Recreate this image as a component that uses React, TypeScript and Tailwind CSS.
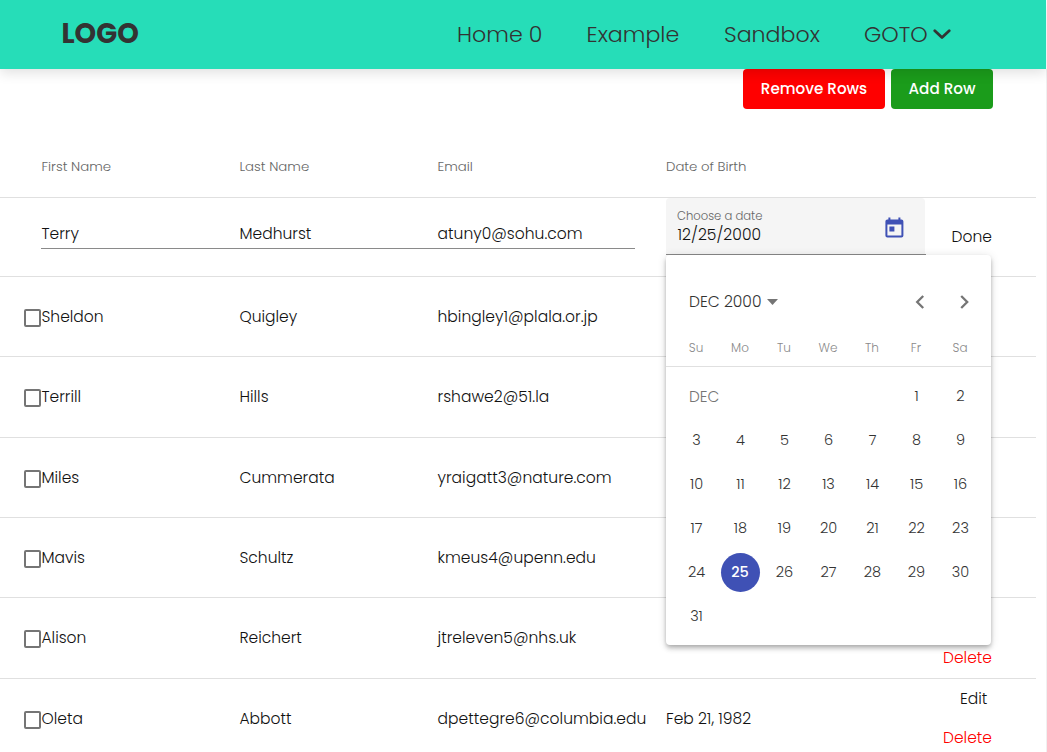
import { ReactNode } from "react";

type Person = { first: ReactNode; last: ReactNode; email: ReactNode; born?: string; edit?: string; remove?: string; tall?: boolean };

const people: Person[] = [
  { first: "Sheldon", last: "Quigley", email: "hbingley1@plala.or.jp" },
  { first: "Terrill", last: "Hills", email: "rshawe2@51.la", tall: true },
  { first: "Miles", last: "Cummerata", email: "yraigatt3@nature.com" },
  { first: "Mavis", last: "Schultz", email: "kmeus4@upenn.edu" },
  { first: "Alison", last: "Reichert", email: "jtreleven5@nhs.uk", remove: "Delete", tall: true },
  { first: "Oleta", last: "Abbott", email: "dpettegre6@columbia.edu", born: "Feb 21, 1982", edit: "Edit", remove: "Delete" },
];

const columns = "grid grid-cols-[41.5px_198px_198px_228.5px_1fr] w-[1036px]";

function Header() {
  return (
    <header className="relative z-10 flex h-[69px] w-[1046px] items-center bg-[#26ddb8] text-[#333] shadow-[0_4px_12px_rgba(0,0,0,0.12)]">
      <div className="-mt-[2px] ml-[61.5px] w-[395.5px] text-[27.5px] leading-8 font-bold">LOGO</div>
      <nav className="flex h-8 items-center text-[22.15px] leading-8 font-light">
        <span className="w-[129.5px]">Home 0</span>
        <span className="w-[137.5px]">Example</span>
        <span className="w-[140px]">Sandbox</span>
        <span className="w-[64px]">GOTO</span>
        <svg className="ml-[4.5px] h-[18px] w-[18px]" viewBox="0 0 18 18" fill="none" stroke="#333" strokeWidth="2.8" strokeLinecap="round" strokeLinejoin="round">
          <path d="M1.8 4.8 9 11.6 16.2 4.8" />
        </svg>
      </nav>
    </header>
  );
}

function PersonRow({ person }: { person: Person }) {
  return (
    <div className={`${columns} ${person.tall ? "h-[81px]" : "h-[80px] [&>span]:pt-px"} items-center border-b border-[#e0e0e0]`}>
      <div className={`${person.tall ? "mt-[2px]" : "mt-[3px]"} ml-6 h-[18px] w-[17px] rounded-[2px] border-2 border-[#757575]`} />
      <span>{person.first}</span>
      <span>{person.last}</span>
      <span className="tracking-[0.03px]">{person.email}</span>
      <div className="flex items-center">
        <span className="w-[277px] pt-px">{person.born}</span>
        <div className={`${person.tall ? "" : "-mt-[2px]"} flex w-[50px] flex-col leading-[39px]`}>
          <span className="h-[39px] pl-[17px]">{person.edit}</span>
          <span className="h-[39px] text-[#f00]">{person.remove}</span>
        </div>
      </div>
    </div>
  );
}

function Calendar() {
  const days = Array.from({ length: 31 }, (_, i) => i + 1);
  return (
    <div className="absolute top-[57px] left-0 h-[390px] w-[325px] rounded bg-white text-[#333] shadow-[0_2px_4px_-1px_rgba(0,0,0,0.2),0_4px_5px_rgba(0,0,0,0.14),0_1px_10px_rgba(0,0,0,0.12)]">
      <div className="flex h-[81px] items-center pt-[13px] pl-[23px]">
        <span className="w-[73px] text-[15.5px] whitespace-nowrap">DEC 2000</span>
        <svg className="ml-[5px] h-[6px] w-[11px]" viewBox="0 0 10 5" preserveAspectRatio="none" fill="#757575"><path d="M0 0h10L5 5z" /></svg>
        <svg className="ml-[137px] h-4 w-[10px]" viewBox="0 0 10 16" fill="none" stroke="#757575" strokeWidth="2.3"><path d="M8.2 2 2.2 8l6 6" /></svg>
        <svg className="ml-[34px] h-4 w-[10px]" viewBox="0 0 10 16" fill="none" stroke="#757575" strokeWidth="2.3"><path d="m2.2 2 6 6-6 6" /></svg>
      </div>
      <div className="grid h-[31px] grid-cols-[repeat(7,44px)] border-b border-[#e0e0e0] pl-2 text-center text-xs leading-[24px] text-[#8a8a8a]">
        {["Su", "Mo", "Tu", "We", "Th", "Fr", "Sa"].map((d) => <span key={d}>{d}</span>)}
      </div>
      <div className="grid auto-rows-[44px] grid-cols-[repeat(7,44px)] pt-[7px] pl-[8.5px] text-center text-[14.5px] leading-[44px] font-light">
        <span className="col-span-5 pl-[14.5px] text-left text-[15.3px] leading-[45px] text-[#757575]">DEC</span>
        {days.map((d) =>
          d === 25 ? (
            <span key={d} className="m-auto flex h-[39px] w-[39px] items-center justify-center rounded-full bg-[#3f51b5] pr-px leading-none font-medium text-white">{d}</span>
          ) : (
            <span key={d}>{d}</span>
          ),
        )}
      </div>
    </div>
  );
}

function EditingRow() {
  return (
    <div className="grid h-[79px] w-[1036px] grid-cols-[666px_260px_1fr] border-b border-[#e0e0e0]">
      <div className="ml-[41px] flex h-[51px] w-[594px] border-b border-[#8a8a8a] pt-[26px] pl-[0.5px] leading-5">
        <span className="w-[198px]">Terry</span>
        <span className="w-[198px]">Medhurst</span>
        <span className="tracking-[0.03px]">atuny0@sohu.com</span>
      </div>
      <div className="relative z-20 h-[57px] border-b border-[#8a8a8a]">
        <div className="flex h-14 w-[259px] justify-between rounded-t bg-[#f5f5f5] pl-[11px]">
          <div className="pt-[10px]">
            <div className="text-[11.6px] leading-4 text-[#666]">Choose a date</div>
            <div className="pl-[0.5px] leading-[21px] tracking-[0.06px]">12/25/2000</div>
          </div>
          <svg className="mt-[18px] mr-[19px] h-6 w-6" viewBox="0 0 24 24" fill="#3f51b5">
            <path transform="translate(.4 -.4)" d="M19 4h-1V2h-2v2H8V2H6v2H5c-1.11 0-1.99.9-1.99 2L3 20c0 1.1.89 2 2 2h14c1.1 0 2-.9 2-2V6c0-1.1-.9-2-2-2zm0 16H5V9h14v11zM7 11h5v5H7z" />
          </svg>
        </div>
        <Calendar />
      </div>
      <span className="pt-[29px] pl-[25.5px] leading-5">Done</span>
    </div>
  );
}

export default function App() {
  return (
    <div className="h-[752px] w-[1047px] overflow-hidden bg-white font-['Poppins','Inter',sans-serif] text-[15.5px] font-light text-[#111]">
      <Header />
      <div className="h-[683px] w-[1047px] border-r border-[#f0f0f0]">
        <div className="flex h-10 gap-[6px] pl-[743px] text-[15.2px] font-medium text-white">
          <button className="w-[142px] rounded bg-[#f00]">Remove Rows</button>
          <button className="w-[102px] rounded bg-[#1b9c1b]">Add Row</button>
        </div>
        <div className={`${columns} h-[89px] items-center border-b border-[#e0e0e0] pt-[27px] text-[13.3px] text-[#666]`}>
          <span />
          <span>First Name</span>
          <span>Last Name</span>
          <span>Email</span>
          <span>Date of Birth</span>
        </div>
        <EditingRow />
        {people.map((p) => <PersonRow key={String(p.email)} person={p} />)}
      </div>
    </div>
  );
}
